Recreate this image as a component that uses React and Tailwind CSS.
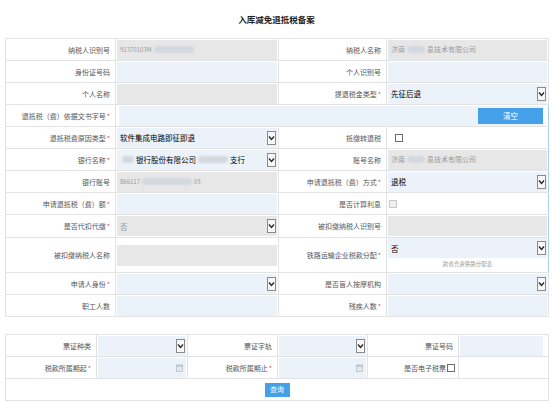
import React from 'react';

function Req() {
  return <span className="text-[#e5484d] text-[7px] ml-[1px]">*</span>;
}

function Label({ text, req, className = '' }) {
  return (
    <td className={`border border-[#e3e3e3] text-right pr-[5px] text-[7px] leading-[10px] text-[#555] whitespace-nowrap ${className}`}>
      {text}
      {req && <Req />}
    </td>
  );
}

function Blob({ w = 24 }) {
  return <span className="inline-block h-[7px] bg-[#d3d8de] rounded-full blur-[1px] align-middle mx-[2px]" style={{ width: w }} />;
}

function Arrow() {
  return (
    <span className="flex items-center justify-center w-[9px] h-[14px] border border-[#8a8a8a] bg-[#f7f7f7] shrink-0">
      <svg width="7" height="6" viewBox="0 0 7 6">
        <path d="M1 1.5 L3.5 4.5 L6 1.5" fill="none" stroke="#222" strokeWidth="1.3" />
      </svg>
    </span>
  );
}

function CalIcon() {
  return (
    <svg width="7" height="8" viewBox="0 0 7 8" className="shrink-0">
      <rect x="0.5" y="1" width="6" height="6.5" fill="#e4e8ee" stroke="#b9c0c9" strokeWidth="0.8" />
      <rect x="0.5" y="1" width="6" height="1.6" fill="#b9c0c9" />
    </svg>
  );
}

function Input({ tone = 'blue', children, select, date, className = '' }) {
  const bg = tone === 'gray' ? 'bg-[#e7e7e7]' : 'bg-[#ecf2fa]';
  return (
    <div className={`h-[20px] ${bg} flex items-center justify-between pl-[3px] pr-[1px] ${className}`}>
      <span className="flex items-center text-[7.5px] leading-[11px] text-black whitespace-nowrap">{children}</span>
      {select && <Arrow />}
      {date && <span className="pr-[2px] flex"><CalIcon /></span>}
    </div>
  );
}

function Val({ children, className = '' }) {
  return <td className={`border border-[#e3e3e3] px-[1px] ${className}`}>{children}</td>;
}

function Check({ disabled }) {
  return (
    <span className={`inline-block w-[8px] h-[8px] border ${disabled ? 'border-[#c8c8c8] bg-[#f0f0f0]' : 'border-[#6d6d6d] bg-white'}`} />
  );
}

export default function App() {
  return (
    <div className="w-[553px] h-[402px] bg-white font-['Noto_Sans_CJK_SC','Liberation_Sans',sans-serif] overflow-hidden">
      <div className="h-[38px] flex items-center justify-center text-[8.5px] font-bold text-[#222]">入库减免退抵税备案</div>

      <table className="ml-[5px] w-[543px] table-fixed border-collapse">
        <colgroup>
          <col className="w-[110px]" />
          <col className="w-[163px]" />
          <col className="w-[108px]" />
          <col className="w-[162px]" />
        </colgroup>
        <tbody>
          <tr className="h-[22px]">
            <Label text="纳税人识别号" />
            <Val><Input tone="gray"><span className="text-[#9a9a9a] text-[6px]">91370103M</span><Blob w={40} /></Input></Val>
            <Label text="纳税人名称" />
            <Val><Input tone="gray"><span className="text-[#9a9a9a] text-[7px]">济南</span><Blob w={18} /><span className="text-[#9a9a9a] text-[7px]">息技术有限公司</span></Input></Val>
          </tr>
          <tr className="h-[22px]">
            <Label text="身份证号码" />
            <Val><Input /></Val>
            <Label text="个人识别号" />
            <Val><Input /></Val>
          </tr>
          <tr className="h-[22px]">
            <Label text="个人名称" />
            <Val><Input tone="gray" /></Val>
            <Label text="提退税金类型" req />
            <Val><Input select>先征后退</Input></Val>
          </tr>
          <tr className="h-[22px]">
            <Label text="退抵税（费）依据文书字号" req />
            <td colSpan={3} className="border border-[#e3e3e3] border-r-[#a9d0f2] pl-[3px] pr-[5px]">
              <div className="h-[20px] bg-[#ecf2fa] flex items-center justify-end">
                <button className="w-[65px] h-[16px] bg-[#45a0ea] text-white text-[7.5px] leading-none">清空</button>
              </div>
            </td>
          </tr>
          <tr className="h-[22px]">
            <Label text="退抵税费原因类型" req />
            <Val><Input select>软件集成电路即征即退</Input></Val>
            <Label text="抵缴转退税" />
            <Val className="border-r-[#a9d0f2]"><div className="pl-[7px] flex items-center"><Check /></div></Val>
          </tr>
          <tr className="h-[22px]">
            <Label text="银行名称" req />
            <Val><Input select><Blob w={12} />银行股份有限公司<Blob w={30} />支行</Input></Val>
            <Label text="账号名称" />
            <Val className="border-r-[#a9d0f2]"><Input tone="gray"><span className="text-[#9a9a9a] text-[7px]">济南</span><Blob w={18} /><span className="text-[#9a9a9a] text-[7px]">息技术有限公司</span></Input></Val>
          </tr>
          <tr className="h-[22px]">
            <Label text="银行账号" />
            <Val><Input tone="gray"><span className="text-[#9a9a9a] text-[6px]">866117</span><Blob w={50} /><span className="text-[#9a9a9a] text-[6px]">03</span></Input></Val>
            <Label text="申请退抵税（费）方式" req />
            <Val className="border-r-[#a9d0f2]"><Input select>退税</Input></Val>
          </tr>
          <tr className="h-[22px]">
            <Label text="申请退抵税（费）额" req />
            <Val><Input /></Val>
            <Label text="是否计算利息" />
            <Val className="border-r-[#a9d0f2]"><div className="pl-[1px] flex items-center"><Check disabled /></div></Val>
          </tr>
          <tr className="h-[23px]">
            <Label text="是否代扣代缴" req />
            <Val><Input tone="gray" select><span className="text-[#9a9a9a]">否</span></Input></Val>
            <Label text="被扣缴纳税人识别号" />
            <Val className="border-r-[#a9d0f2]"><Input tone="gray" /></Val>
          </tr>
          <tr className="h-[35px]">
            <Label text="被扣缴纳税人名称" />
            <Val><Input tone="gray" className="h-[21px]" /></Val>
            <Label text="铁路运输企业税款分配" req />
            <Val className="border-r-[#a9d0f2] align-top">
              <Input select>否</Input>
              <div className="text-center text-[5.5px] leading-none text-[#999] mt-[4px]">跨省合资铁路分配表</div>
            </Val>
          </tr>
          <tr className="h-[22px]">
            <Label text="申请人身份" req />
            <Val><Input select /></Val>
            <Label text="是否盲人按摩机构" />
            <Val><Input select /></Val>
          </tr>
          <tr className="h-[22px]">
            <Label text="职工人数" />
            <Val><Input /></Val>
            <Label text="残疾人数" req />
            <Val><Input /></Val>
          </tr>
        </tbody>
      </table>

      <table className="ml-[5px] mt-[17px] w-[543px] table-fixed border-collapse">
        <colgroup>
          <col className="w-[91px]" />
          <col className="w-[91px]" />
          <col className="w-[90px]" />
          <col className="w-[90px]" />
          <col className="w-[91px]" />
          <col className="w-[90px]" />
        </colgroup>
        <tbody>
          <tr className="h-[22px]">
            <Label text="票证种类" className="pr-[4px]" />
            <Val><Input select /></Val>
            <Label text="票证字轨" className="pr-[4px]" />
            <Val><Input select /></Val>
            <Label text="票证号码" className="pr-[4px]" />
            <Val className="pr-[5px]"><Input /></Val>
          </tr>
          <tr className="h-[22px]">
            <Label text="税款所属期起" req className="pr-[4px]" />
            <Val><Input date /></Val>
            <Label text="税款所属期止" req className="pr-[4px]" />
            <Val><Input date /></Val>
            <td className="border border-[#e3e3e3] text-right pr-[3px] text-[7px] leading-[10px] text-[#555] whitespace-nowrap">
              <span className="inline-flex items-center gap-[1px]">是否电子税票<Check /></span>
            </td>
            <td className="border-t border-r border-[#e3e3e3]" />
          </tr>
          <tr className="h-[22px]">
            <td colSpan={6} className="border border-[#e3e3e3]">
              <div className="flex justify-center">
                <button className="w-[25px] h-[14px] bg-[#45a0ea] text-white text-[7px] leading-none">查询</button>
              </div>
            </td>
          </tr>
        </tbody>
      </table>
    </div>
  );
}
